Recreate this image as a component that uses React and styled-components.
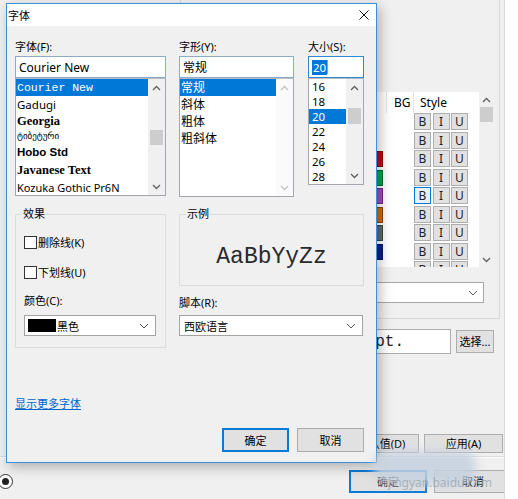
import styled, { createGlobalStyle } from 'styled-components';

const SANS = `"Noto Sans", "Noto Sans CJK SC", sans-serif`;
const MONO = `"Liberation Mono", "DejaVu Sans Mono", monospace`;
const SERIF = `"Liberation Serif", "DejaVu Serif", serif`;

const GlobalStyle = createGlobalStyle`
  html, body { margin: 0; padding: 0; background: #ffffff; }
  body { font-family: ${SANS}; font-size: 11px; color: #000; }
  * { box-sizing: border-box; }
`;

const Desktop = styled.div`
  position: relative;
  width: 518px;
  height: 499px;
  overflow: hidden;
  background: #fff;
`;

/* ---------- shared bits ---------- */
const Chevron = ({ up, color = '#606060' }) => (
  <svg width="9" height="6" viewBox="0 0 9 6">
    <polyline
      points={up ? '1,5 4.5,1.5 8,5' : '1,1 4.5,4.5 8,1'}
      fill="none"
      stroke={color}
      strokeWidth="1.3"
    />
  </svg>
);

const DropArrow = () => (
  <svg width="10" height="6" viewBox="0 0 10 6">
    <polyline points="1,1 5,5 9,1" fill="none" stroke="#555" strokeWidth="1" />
  </svg>
);

const SbTrack = styled.div`
  width: ${(p) => p.$w}px;
  flex: none;
  display: flex;
  flex-direction: column;
  background: ${(p) => p.$bg};
`;

const SbArrow = styled.div`
  height: ${(p) => p.$h}px;
  flex: none;
  display: flex;
  align-items: center;
  justify-content: center;
`;

const SbRail = styled.div`
  flex: 1;
  padding-top: ${(p) => p.$top}px;
`;

const SbThumb = styled.div`
  height: ${(p) => p.$h}px;
  margin: 0 ${(p) => p.$inset}px;
  background: #cdcdcd;
`;

function ScrollBar({ w = 17, arrow = 17, thumbTop = 0, thumbH = 0, inset = 2, disabled, bg = '#f0f0f0' }) {
  const c = disabled ? '#c4c4c4' : '#606060';
  return (
    <SbTrack $w={w} $bg={bg}>
      <SbArrow $h={arrow}>
        <Chevron up color={c} />
      </SbArrow>
      <SbRail $top={thumbTop}>{thumbH > 0 && <SbThumb $h={thumbH} $inset={inset} />}</SbRail>
      <SbArrow $h={arrow}>
        <Chevron color={c} />
      </SbArrow>
    </SbTrack>
  );
}

const WinButton = styled.button`
  width: ${(p) => p.$w}px;
  height: ${(p) => p.$h}px;
  flex: none;
  padding: 0;
  background: #e1e1e1;
  border: ${(p) => (p.$default ? '2px solid #0a7ad6' : '1px solid #adadad')};
  font-family: ${SANS};
  font-size: 11px;
  line-height: 1;
  color: #000;
`;

/* ---------- window behind ---------- */
const BackWindow = styled.div`
  position: absolute;
  left: 0;
  top: 0;
  width: 505px;
  height: 499px;
  background: #f0f0f0;
  border-right: 1px solid #dadada;
  display: flex;
  flex-direction: column;
  overflow: hidden;
`;

const ColorsFrame = styled.div`
  margin: -10px 4px 0 180px;
  height: 329px;
  flex: none;
  border: 1px solid #d9d9d9;
  padding: 101px 5px 0 0;
  display: flex;
  flex-direction: column;
`;

const Table = styled.div`
  height: 175px;
  display: flex;
`;

const TableBody = styled.div`
  flex: 1;
  background: #fff;
  overflow: hidden;
`;

const TableRow = styled.div`
  height: ${(p) => p.$h}px;
  display: grid;
  grid-template-columns: 1fr 27px 27px 66px;
`;

const HeadCell = styled.div`
  display: flex;
  align-items: center;
  padding-left: ${(p) => p.$pad}px;
  border-left: ${(p) => (p.$line ? '1px solid #e5e5e5' : 'none')};
  font-size: 12px;
  color: #000;
`;

const SwatchCell = styled.div`
  display: flex;
  justify-content: flex-end;
  align-items: center;
  padding-right: 3px;
`;

const Swatch = styled.div`
  width: 22px;
  height: 16px;
  background: ${(p) => p.$color};
  border: 1px solid rgba(0, 0, 0, 0.35);
`;

const StyleCell = styled.div`
  display: flex;
  align-items: flex-start;
  gap: 1.5px;
  padding-left: 1px;
`;

const FlagButton = styled.div`
  width: 17px;
  height: 17px;
  display: flex;
  align-items: center;
  justify-content: center;
  background: ${(p) => (p.$hot ? '#e5f1fb' : '#e1e1e1')};
  border: 1px solid ${(p) => (p.$hot ? '#0078d7' : '#adadad')};
  font-size: 12px;
  color: #222;
`;

const BackSelect = styled.div`
  margin: 15px 10px 0 0;
  align-self: flex-end;
  width: 260px;
  height: 21px;
  background: #fff;
  border: 1px solid #a8a8a8;
  display: flex;
  align-items: center;
  justify-content: flex-end;
  padding-right: 5px;
`;

const FontRow = styled.div`
  margin: 10px 10px 0 0;
  display: flex;
  justify-content: flex-end;
  align-items: center;
  gap: 5px;
  height: 25px;
`;

const PreviewBox = styled.div`
  width: 220px;
  height: 25px;
  background: #fff;
  border: 1px solid #adadad;
  display: flex;
  align-items: center;
  justify-content: flex-end;
  padding-right: 46px;
  overflow: hidden;
  white-space: nowrap;
  font-family: ${MONO};
  font-size: 16px;
  color: #222;
`;

const ActionRow = styled.div`
  margin: ${(p) => p.$mt}px ${(p) => p.$mr}px 0 0;
  display: flex;
  justify-content: flex-end;
  align-items: center;
  gap: ${(p) => p.$gap}px;
`;

const Separator = styled.div`
  margin: 3px 0 0 0;
  height: 2px;
  border-top: 1px solid #dcdcdc;
  border-bottom: 1px solid #fbfbfb;
`;

const FooterRow = styled.div`
  margin-top: 12px;
  display: flex;
  align-items: center;
  height: 23px;
`;

const Radio = styled.div`
  margin-left: -2px;
  width: 15px;
  height: 15px;
  border-radius: 50%;
  border: 1px solid #333;
  background: #fff;
  display: flex;
  align-items: center;
  justify-content: center;
  &::after {
    content: '';
    width: 7px;
    height: 7px;
    border-radius: 50%;
    background: #222;
  }
`;

const FooterButtons = styled.div`
  margin-left: auto;
  margin-right: -8px;
  display: flex;
  gap: 7px;
`;

/* ---------- font dialog ---------- */
const FontDialog = styled.div`
  position: absolute;
  left: 6px;
  top: 3px;
  width: 371px;
  height: 460px;
  border: 1px solid #3d8fd8;
  background: #f0f0f0;
  box-shadow: 3px 4px 12px rgba(0, 0, 0, 0.28);
  display: flex;
  flex-direction: column;
`;

const TitleBar = styled.div`
  height: 22px;
  flex: none;
  background: #fff;
  display: flex;
  align-items: center;
  justify-content: space-between;
  padding: 0 7px 0 1px;
  font-size: 11px;
`;

const DialogBody = styled.div`
  flex: 1;
  display: flex;
  flex-direction: column;
  padding: 14px 12px 0 8px;
`;

const TopRow = styled.div`
  display: flex;
  align-items: flex-start;
`;

const Column = styled.div`
  width: ${(p) => p.$w}px;
  margin-right: ${(p) => p.$mr || 0}px;
  flex: none;
  display: flex;
  flex-direction: column;
`;

const Label = styled.div`
  height: 14px;
  line-height: 14px;
  margin-bottom: ${(p) => p.$mb || 0}px;
  margin-top: ${(p) => p.$mt || 0}px;
  font-size: 11px;
  white-space: nowrap;
`;

const TextInput = styled.div`
  height: 22px;
  background: #fff;
  border: 1px solid ${(p) => (p.$focus ? '#2f86d6' : '#8fa9cc')};
  display: flex;
  align-items: center;
  padding-left: ${(p) => p.$pad}px;
  font-size: 12px;
  white-space: nowrap;
`;

const Selected = styled.span`
  background: #0078d7;
  color: #fff;
  padding: 0 1px;
  font-size: 11.5px;
  line-height: 15px;
`;

const Caret = styled.span`
  display: inline-block;
  width: 1px;
  height: 14px;
  background: #e6902e;
`;

const ListBox = styled.div`
  height: ${(p) => p.$h}px;
  background: #fff;
  border: 1px solid #a3a6ac;
  border-top-color: #b8bcc2;
  display: flex;
  overflow: hidden;
`;

const ListItems = styled.div`
  flex: 1;
  overflow: hidden;
`;

const ListItem = styled.div`
  height: ${(p) => p.$h}px;
  display: flex;
  align-items: center;
  padding-left: ${(p) => p.$pad}px;
  background: ${(p) => (p.$sel ? '#0078d7' : 'transparent')};
  color: ${(p) => (p.$sel ? '#fff' : '#000')};
  font-family: ${(p) => p.$family || SANS};
  font-size: ${(p) => p.$size || 12}px;
  font-weight: ${(p) => p.$weight || 400};
  line-height: 1;
  white-space: nowrap;
`;

const BottomRow = styled.div`
  margin-top: 17px;
  display: flex;
  align-items: flex-start;
`;

const GroupBox = styled.div`
  position: relative;
  width: ${(p) => p.$w}px;
  height: ${(p) => p.$h}px;
  flex: none;
  border: 1px solid #dcdcdc;
  display: flex;
  flex-direction: column;
  padding: ${(p) => p.$pad};
`;

const Legend = styled.div`
  position: absolute;
  left: 6px;
  top: -8px;
  padding: 0 1px;
  background: #f0f0f0;
  line-height: 14px;
  font-size: 11px;
`;

const CheckRow = styled.div`
  height: 14px;
  display: flex;
  align-items: center;
  gap: 1px;
  margin-bottom: ${(p) => p.$mb}px;
  font-size: 11px;
`;

const CheckBox = styled.div`
  width: 13px;
  height: 13px;
  border: 1px solid #333;
  background: #fff;
`;

const Select = styled.div`
  width: ${(p) => p.$w}px;
  height: 21px;
  background: #fff;
  border: 1px solid #a3a3a3;
  display: flex;
  align-items: center;
  padding: 0 6px 0 ${(p) => p.$pad}px;
  gap: 1px;
  font-size: 11px;
  & > svg {
    margin-left: auto;
  }
`;

const ColorChip = styled.div`
  width: 28px;
  height: 13px;
  background: #000;
`;

const SampleText = styled.div`
  flex: 1;
  display: flex;
  align-items: center;
  justify-content: center;
  padding-top: 13px;
  font-family: ${MONO};
  font-size: 23px;
  color: #2a2a2a;
`;

const MoreLink = styled.a`
  margin-top: 49px;
  align-self: flex-start;
  height: 14px;
  line-height: 14px;
  font-size: 11px;
  color: #0066cc;
  text-decoration: underline;
`;

const DialogButtons = styled.div`
  margin-top: 17px;
  display: flex;
  justify-content: flex-end;
  gap: 8px;
`;

const Watermark = styled.div`
  position: absolute;
  left: 370px;
  top: 447px;
  width: 112px;
  height: 44px;
`;

const Blob = styled.div`
  position: absolute;
  inset: 4px 6px 6px 4px;
  border-radius: 14px;
  background: rgba(196, 208, 222, 0.85);
  filter: blur(5px);
`;

const WatermarkText = styled.div`
  position: absolute;
  left: 18px;
  top: 27px;
  font-size: 12px;
  color: rgba(150, 162, 178, 0.75);
  white-space: nowrap;
`;

/* ---------- data ---------- */
const fontItems = [
  { label: 'Courier New', family: MONO, size: 11.5, h: 17, sel: true },
  { label: 'Gadugi', size: 11.5, h: 17 },
  { label: 'Georgia', family: SERIF, size: 12.5, weight: 700, h: 16 },
  { label: 'ტიბეტური', family: `"DejaVu Sans", sans-serif`, size: 9, h: 15 },
  { label: 'Hobo Std', family: `"Liberation Sans", sans-serif`, size: 11.5, weight: 700, h: 18 },
  { label: 'Javanese Text', family: SERIF, size: 12.5, weight: 700, h: 16 },
  { label: 'Kozuka Gothic Pr6N', size: 11, h: 19 },
];

const styleItems = ['常规', '斜体', '粗体', '粗斜体'];
const sizeItems = ['16', '18', '20', '22', '24', '26', '28'];
const swatches = [null, null, '#c8001a', '#00a651', '#a24bbf', '#d06c00', '#5f6a72', '#0b1f8c', null];

export default function App() {
  return (
    <Desktop>
      <GlobalStyle />

      <BackWindow>
        <ColorsFrame>
          <Table>
            <TableBody>
              <TableRow $h={21}>
                <div />
                <div />
                <HeadCell $pad={7} $line>BG</HeadCell>
                <HeadCell $pad={6} $line>Style</HeadCell>
              </TableRow>
              {swatches.map((c, i) => (
                <TableRow key={i} $h={18.5}>
                  <div />
                  <SwatchCell>{c && <Swatch $color={c} />}</SwatchCell>
                  <div />
                  <StyleCell>
                    <FlagButton $hot={i === 4}>B</FlagButton>
                    <FlagButton>I</FlagButton>
                    <FlagButton>U</FlagButton>
                  </StyleCell>
                </TableRow>
              ))}
            </TableBody>
            <ScrollBar w={15} arrow={15} thumbTop={0} thumbH={15} inset={1} />
          </Table>
          <BackSelect>
            <DropArrow />
          </BackSelect>
        </ColorsFrame>

        <FontRow>
          <PreviewBox>Courier New, 20pt.</PreviewBox>
          <WinButton $w={38} $h={23}>选择...</WinButton>
        </FontRow>

        <ActionRow $mt={80} $mr={1} $gap={5}>
          <WinButton $w={75} $h={19}>默认值(D)</WinButton>
          <WinButton $w={79} $h={19}>应用(A)</WinButton>
        </ActionRow>

        <Separator />

        <FooterRow>
          <Radio />
          <FooterButtons>
            <WinButton $w={78} $h={23} $default>确定</WinButton>
            <WinButton $w={78} $h={23}>取消</WinButton>
          </FooterButtons>
        </FooterRow>
      </BackWindow>

      <FontDialog>
        <TitleBar>
          <span>字体</span>
          <svg width="10" height="10" viewBox="0 0 10 10">
            <path d="M0.5 0.5 L9.5 9.5 M9.5 0.5 L0.5 9.5" stroke="#111" strokeWidth="1" />
          </svg>
        </TitleBar>

        <DialogBody>
          <TopRow>
            <Column $w={151} $mr={13}>
              <Label $mb={2}>字体(F):</Label>
              <TextInput $pad={3}>Courier New</TextInput>
              <ListBox $h={118}>
                <ListItems>
                  {fontItems.map((f) => (
                    <ListItem
                      key={f.label}
                      $h={f.h}
                      $pad={1}
                      $sel={f.sel}
                      $family={f.family}
                      $size={f.size}
                      $weight={f.weight}
                    >
                      {f.label}
                    </ListItem>
                  ))}
                </ListItems>
                <ScrollBar thumbTop={34} thumbH={15} />
              </ListBox>
            </Column>

            <Column $w={115} $mr={14}>
              <Label $mb={2}>字形(Y):</Label>
              <TextInput $pad={3}>常规</TextInput>
              <ListBox $h={119}>
                <ListItems>
                  {styleItems.map((s, i) => (
                    <ListItem key={s} $h={17} $pad={1} $sel={i === 0}>
                      {s}
                    </ListItem>
                  ))}
                </ListItems>
                <ScrollBar disabled bg="#fafafa" />
              </ListBox>
            </Column>

            <Column $w={56}>
              <Label $mb={2}>大小(S):</Label>
              <TextInput $pad={3} $focus>
                <Selected>20</Selected>
                <Caret />
              </TextInput>
              <ListBox $h={107}>
                <ListItems>
                  {sizeItems.map((s) => (
                    <ListItem key={s} $h={15} $pad={3} $size={11.5} $sel={s === '20'}>
                      {s}
                    </ListItem>
                  ))}
                </ListItems>
                <ScrollBar thumbTop={12} thumbH={16} />
              </ListBox>
            </Column>
          </TopRow>

          <BottomRow>
            <GroupBox $w={151} $h={134} $pad="20px 0 0 8px" style={{ marginRight: 13 }}>
              <Legend>效果</Legend>
              <CheckRow $mb={16}>
                <CheckBox />
                删除线(K)
              </CheckRow>
              <CheckRow $mb={15}>
                <CheckBox />
                下划线(U)
              </CheckRow>
              <Label $mb={7}>颜色(C):</Label>
              <Select $w={132} $pad={3}>
                <ColorChip />
                黑色
                <DropArrow />
              </Select>
            </GroupBox>

            <Column $w={185}>
              <GroupBox $w={185} $h={72} $pad="0">
                <Legend>示例</Legend>
                <SampleText>AaBbYyZz</SampleText>
              </GroupBox>
              <Label $mt={10} $mb={5}>脚本(R):</Label>
              <Select $w={184} $pad={4}>
                西欧语言
                <DropArrow />
              </Select>
            </Column>
          </BottomRow>

          <MoreLink href="#">显示更多字体</MoreLink>

          <DialogButtons>
            <WinButton $w={67} $h={24} $default>确定</WinButton>
            <WinButton $w={67} $h={24}>取消</WinButton>
          </DialogButtons>
        </DialogBody>
      </FontDialog>

      <Watermark>
        <Blob />
        <WatermarkText>jingyan.baidu.com</WatermarkText>
      </Watermark>
    </Desktop>
  );
}
